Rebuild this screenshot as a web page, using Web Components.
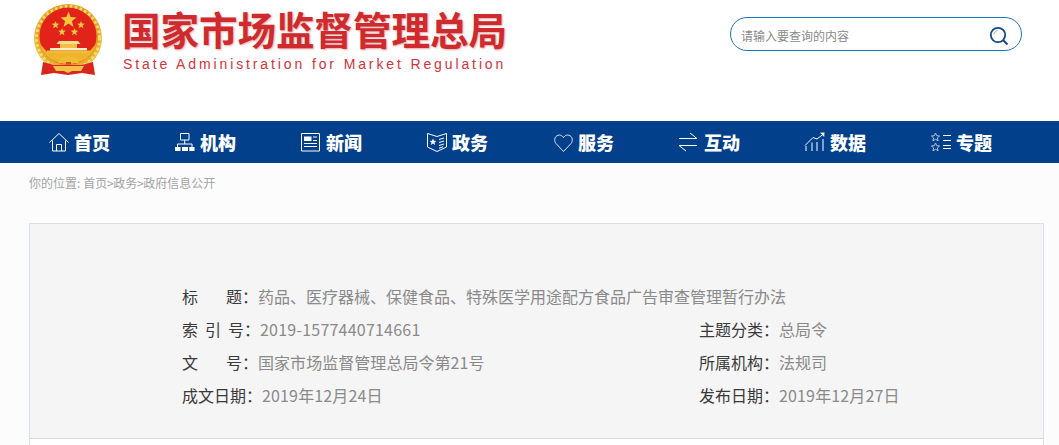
<!DOCTYPE html>
<html lang="zh">
<head>
<meta charset="utf-8">
<title>国家市场监督管理总局</title>
<style>
  html, body { margin: 0; padding: 0; }
  body {
    background: #fcfcfc;
    font-family: "Liberation Sans", "Noto Sans CJK SC", sans-serif;
    overflow: hidden;
    height: 445px;
  }
</style>
</head>
<body>
<site-header></site-header>
<main-nav>
  <nav-item icon="home">首页</nav-item>
  <nav-item icon="org">机构</nav-item>
  <nav-item icon="news">新闻</nav-item>
  <nav-item icon="gov">政务</nav-item>
  <nav-item icon="heart">服务</nav-item>
  <nav-item icon="swap">互动</nav-item>
  <nav-item icon="chart">数据</nav-item>
  <nav-item icon="stars">专题</nav-item>
</main-nav>
<bread-crumb>你的位置:<a class="first">首页</a>&gt;<a>政务</a>&gt;<a>政府信息公开</a></bread-crumb>
<info-panel>
  <info-row slot="wide" label="标题" width="60">药品、医疗器械、保健食品、特殊医学用途配方食品广告审查管理暂行办法</info-row>
  <info-row label="索引号" width="62" spacing="0.22">2019-1577440714661</info-row>
  <info-row label="主题分类">总局令</info-row>
  <info-row label="文号" width="60" spacing="0.05">国家市场监督管理总局令第21号</info-row>
  <info-row label="所属机构">法规司</info-row>
  <info-row label="成文日期" spacing="0.15">2019年12月24日</info-row>
  <info-row label="发布日期" spacing="0.15">2019年12月27日</info-row>
</info-panel>

<script>
const ICONS = {
  home: '<path d="M.5 10.500 10 1.500l9.500 9M3.500 8.500V19h13V8.500M7.500 19v-6.500h5V19"/>',
  org: '<path d="M5.500 1.500h8.500v6.500H5.500zM9.700 8v4M2.500 15v-3h14.500v3"/><path d="M0 15h5.500v4H0zM7 15h6v4H7zM14.300 15h5.200v4h-5.200z" fill="#fff" stroke="none"/>',
  news: '<path d="M.5 1.500h18v17.500H.5z"/><path d="M3 4.500h7.500v4.500H3z" fill="#fff" stroke="none"/><path d="M12 5h4M12 8.500h4M3 11.500h13M3 14.500h13"/>',
  gov: '<path d="M.5 1.500 10 4.500l9.500-3V15L10 19.500.5 15z"/><path d="m12 7.500 5-1.500M12 10.500l5-1.500M12 13.500l5-1.500M12 16.200l4-1.400"/><path d="m6 6.500 1 2.300 2.400.1-1.900 1.600.7 2.400L6 11.600l-2.200 1.300.7-2.400-1.900-1.600 2.400-.1z" fill="#fff" stroke="none"/>',
  heart: '<path d="M10.500 19.500 3 11.500C.9 9 1.400 5.300 4 3.700 6.400 2.300 9.200 3.200 10.500 5.700 11.800 3.200 14.600 2.300 17 3.700c2.600 1.600 3.100 5.300 1 7.800z" stroke="#dfe7f2"/>',
  swap: '<path d="M0 6.500h18L11 1M18 13.500H0l7 5.500"/>',
  chart: '<path d="M1 19v-5M7 19v-8.500M12 19v-9M18 19V7M0 13.500l8-8 4 1.500 6.500-5"/><path d="m15 .8 4.500-.3-.3 4.500z" fill="#fff" stroke="none"/>',
  stars: '<path d="m4.500 1 1.200 2.700 2.900.3-2.200 1.900.7 2.900-2.600-1.500-2.600 1.500.7-2.900L.4 4l2.900-.3zM4.500 11l1.200 2.700 2.900.3-2.200 1.900.7 2.900-2.600-1.500-2.600 1.500.7-2.900L.4 14l2.900-.3z" stroke="#b4c8e0"/><path d="M12 3.500h8M12 8.500h8M12 13.500h8M12 16.500h8"/>'
};

const star = (x, y, r) => {
  let d = '';
  for (let i = 0; i < 10; i++) {
    const a = -Math.PI / 2 + i * Math.PI / 5;
    const l = i % 2 ? r * 0.42 : r;
    d += `${i ? 'L' : 'M'}${(x + l * Math.cos(a)).toFixed(1)} ${(y + l * Math.sin(a)).toFixed(1)}`;
  }
  return `<path d="${d}z"/>`;
};

class SiteHeader extends HTMLElement {
  constructor() {
    super();
    this.attachShadow({ mode: 'open' });
  }

  connectedCallback() {
    this.shadowRoot.innerHTML = `
      <style>
        :host {
          display: flex;
          height: 121px;
          background: #fff;
          box-sizing: border-box;
          padding: 0 37px 0 34px;
          justify-content: space-between;
          align-items: flex-start;
        }
        .brand { display: flex; gap: 20px; padding-top: 4px; }
        svg.emblem { width: 68px; height: 71px; display: block; }
        .names { padding-top: 7px; }
        h1 {
          margin: 0;
          font: 700 38.5px/42px "Liberation Sans", "Noto Sans CJK SC", sans-serif;
          color: #cf2a2d;
          text-shadow: 1px 1px 2px #e3a9a9;
          white-space: nowrap;
        }
        p {
          margin: 2px 0 0 1px;
          font: 14px/18px "Liberation Sans", sans-serif;
          letter-spacing: 2.88px;
          color: #d3333a;
          white-space: nowrap;
        }
        .search {
          margin-top: 17px;
          width: 292px;
          height: 34px;
          box-sizing: border-box;
          border: 1px solid #1b76c2;
          border-radius: 17px;
          display: flex;
          align-items: center;
          justify-content: space-between;
          padding: 2px 12px 0 10px;
          font: 12px "Noto Sans CJK SC", sans-serif;
          color: #8a8a8a;
        }
        .search svg { width: 20px; height: 20px; margin-top: 2px; }
      </style>
      <div class="brand">
        <svg class="emblem" viewBox="34 4 68 71">
          <defs>
            <radialGradient id="gold" cx="50%" cy="45%" r="55%">
              <stop offset="78%" stop-color="#e39a1c"/>
              <stop offset="100%" stop-color="#f6cf58"/>
            </radialGradient>
          </defs>
          <circle cx="68" cy="38" r="34" fill="url(#gold)"/>
          <circle cx="68" cy="38" r="31.500" fill="none" stroke="#f9dc78" stroke-width="3" stroke-dasharray="2.500 2.500"/>
          <circle cx="68" cy="36" r="28.500" fill="#e2231a"/>
          <path d="M40 44c3 12 14 20 28 20s25-8 28-20l-8 9H48z" fill="#eeb42c"/>
          <g fill="#f6c93c">
            ${star(68.5, 20, 8.5)}
            ${star(55.500, 25, 4)}
            ${star(81, 25, 4)}
            ${star(62, 32, 4)}
            ${star(74.500, 32, 4)}
          </g>
          <path d="M59 41h19l2.500 3H56.500z" fill="#f8dc8a"/>
          <path d="M60 44h17v4H60z" fill="#f2c04a"/>
          <path d="M50 48h37v2.500H50z" fill="#fdf0c8"/>
          <path d="M47 50.500h43v2.500H47z" fill="#f2bb36"/>
          <path d="M43 62 41 75l13-2 14 2 14-2 13 2-2-13-11 3H54z" fill="#d8261c"/>
          <path d="M58 63c2-5 6-7 10.500-7s8.500 2 10.500 7z" fill="#f2bb36"/>
          <path d="M53 66h31l-3 5H72l-4 2-4-2h-8z" fill="#f2c04a"/>
          <path d="M66 62h5v2h-5z" fill="#c9521c"/>
        </svg>
        <div class="names">
          <h1>国家市场监督管理总局</h1>
          <p>State Administration for Market Regulation</p>
        </div>
      </div>
      <div class="search">
        <span>请输入要查询的内容</span>
        <svg viewBox="0 0 20 20" fill="none">
          <circle cx="9" cy="9" r="7.200" stroke="#14488a" stroke-width="1.800"/>
          <path d="m14 14 4.500 4.500" stroke="#14488a" stroke-width="2"/>
          <path d="M5 8c.5-2 2-3.200 3.500-3.500" stroke="#8fb0d4"/>
        </svg>
      </div>
    `;
  }
}

class MainNav extends HTMLElement {
  constructor() {
    super();
    this.attachShadow({ mode: 'open' });
  }

  connectedCallback() {
    this.shadowRoot.innerHTML = `
      <style>
        :host {
          display: grid;
          grid-template-columns: repeat(8, 126px);
          height: 42px;
          background: #03408b;
          padding-left: 49px;
        }
      </style>
      <slot></slot>
    `;
  }
}

class NavItem extends HTMLElement {
  constructor() {
    super();
    this.attachShadow({ mode: 'open' });
  }

  connectedCallback() {
    const icon = ICONS[this.getAttribute('icon')] || '';
    this.shadowRoot.innerHTML = `
      <style>
        :host {
          display: flex;
          align-items: center;
          gap: 5px;
          color: #fff;
          font: 900 18px/42px "Noto Sans CJK SC", sans-serif;
        }
        svg { width: 20px; height: 20px; flex: none; overflow: visible; }
      </style>
      <svg viewBox="0 0 20 20" fill="none" stroke="#fff" stroke-width="1">${icon}</svg>
      <slot></slot>
    `;
  }
}

class BreadCrumb extends HTMLElement {
  constructor() {
    super();
    this.attachShadow({ mode: 'open' });
  }

  connectedCallback() {
    this.shadowRoot.innerHTML = `
      <style>
        :host {
          display: block;
          height: 60px;
          box-sizing: border-box;
          padding: 12px 0 0 29px;
          font: 12px/16px "Noto Sans CJK SC", sans-serif;
          color: #a3a3a3;
          background: #fcfcfc;
        }
        ::slotted(a) { margin: 0 -.4px; }
        ::slotted(a.first) { margin-left: 3px; }
      </style>
      <slot></slot>
    `;
  }
}

class InfoPanel extends HTMLElement {
  constructor() {
    super();
    this.attachShadow({ mode: 'open' });
  }

  connectedCallback() {
    this.shadowRoot.innerHTML = `
      <style>
        :host {
          display: block;
          margin: 0 15px 0 29px;
          height: 222px;
          box-sizing: border-box;
          border: solid #d8e0ea;
          border-width: 1px 1px 0;
          background: #fff;
        }
        .head {
          height: 215px;
          box-sizing: border-box;
          border-bottom: 1px solid #d9d9d9;
          background: #f5f5f5;
          padding: 56px 0 0 152px;
        }
        .wide { display: block; height: 33px; }
        .grid {
          display: grid;
          grid-template-columns: 517px 1fr;
          grid-auto-rows: 33px;
        }
      </style>
      <div class="head">
        <div class="wide"><slot name="wide"></slot></div>
        <div class="grid"><slot></slot></div>
      </div>
    `;
  }
}

class InfoRow extends HTMLElement {
  constructor() {
    super();
    this.attachShadow({ mode: 'open' });
  }

  connectedCallback() {
    const width = this.getAttribute('width');
    const spacing = this.getAttribute('spacing') || '0';
    this.shadowRoot.innerHTML = `
      <style>
        :host {
          display: flex;
          font: 16px/33px "Noto Sans CJK SC", sans-serif;
          white-space: nowrap;
        }
        b { font-weight: 400; color: #3a3a3a; }
        i {
          font-style: normal;
          display: inline-block;
          ${width ? `width: ${width}px; text-align-last: justify;` : ''}
        }
        span { color: #8a8a8a; letter-spacing: ${spacing}px; }
      </style>
      <b><i>${this.getAttribute('label')}</i>：</b>
      <span><slot></slot></span>
    `;
  }
}

customElements.define('site-header', SiteHeader);
customElements.define('main-nav', MainNav);
customElements.define('nav-item', NavItem);
customElements.define('bread-crumb', BreadCrumb);
customElements.define('info-panel', InfoPanel);
customElements.define('info-row', InfoRow);
</script>
</body>
</html>
